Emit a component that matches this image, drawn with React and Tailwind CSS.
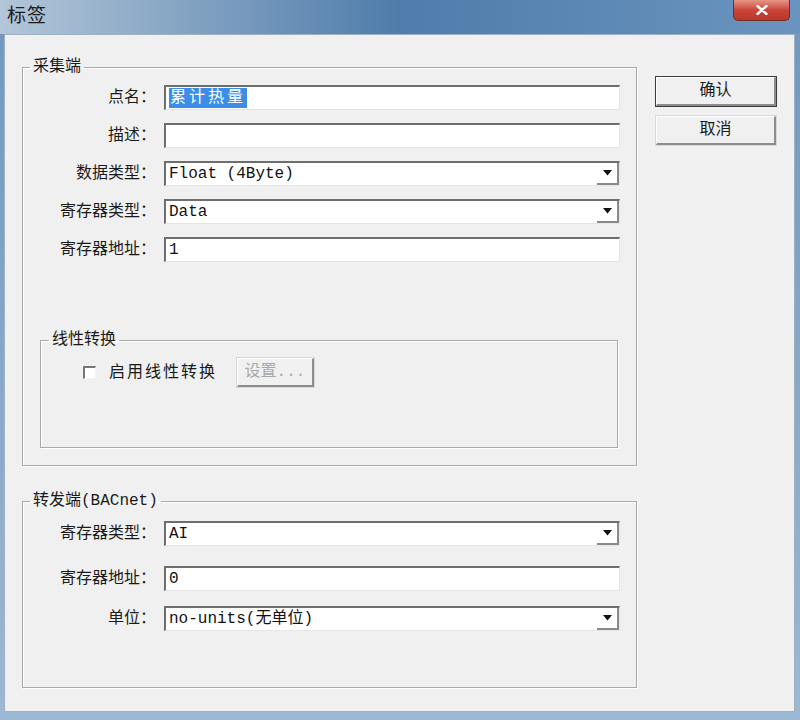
import React from "react";

const font = "font-['Liberation_Mono','Noto_Sans_CJK_SC',monospace]";

function Field({ value, combo, selected, mt = "" }) {
  return (
    <div className={`flex h-[25px] w-[456px] bg-white border-t-2 border-l-2 border-[#6e6e6e] border-b border-r border-b-[#e6e6e6] border-r-[#e6e6e6] ${mt}`}>
      <div className="flex-1 flex items-center pl-[3px] text-[16px] leading-[20px] text-[#111] whitespace-nowrap overflow-hidden">
        {selected ? (
          <span className="bg-[#3a8ee6] text-white px-[1px] tracking-[3px]">{value}</span>
        ) : (
          value
        )}
      </div>
      {combo && (
        <div className="w-[22px] h-full flex items-center justify-center border-b-2 border-r-2 border-[#8a8a8a]">
          <svg width="9" height="6" viewBox="0 0 9 6">
            <path d="M0 0 H9 L4.5 5.5 Z" fill="#111" />
          </svg>
        </div>
      )}
    </div>
  );
}

function Row({ label, children, className = "" }) {
  return (
    <div className={`flex items-center h-[25px] ${className}`}>
      <div className="w-[134px] text-right text-[16px] leading-[20px] text-[#1a1a1a] pr-[1px]">{label}</div>
      <div className="ml-[7px]">{children}</div>
    </div>
  );
}

function Group({ title, className = "", legendClass = "", children }) {
  return (
    <fieldset className={`border border-[#a9a9a9] shadow-[inset_1px_1px_0_#ffffff,1px_1px_0_#ffffff] ${className}`}>
      <legend className={`px-[3px] text-[16px] leading-[20px] text-[#1a1a1a] ${legendClass}`}>{title}</legend>
      {children}
    </fieldset>
  );
}

function WinButton({ children, primary, disabled, className = "" }) {
  return (
    <div
      className={`flex items-center justify-center text-[16px] leading-[20px] bg-[#f0f0f0] ${
        primary ? "border border-[#3c3c3c]" : "border border-[#d8d8d8]"
      } ${className}`}
    >
      <div
        className={`w-full h-full flex items-center justify-center border-t border-l border-white border-b-2 border-r-2 border-b-[#8c8c8c] border-r-[#8c8c8c] ${
          disabled ? "text-[#a8a8a8]" : "text-[#1a1a1a]"
        }`}
      >
        {children}
      </div>
    </div>
  );
}

export default function App() {
  return (
    <div className={`w-[800px] h-[720px] overflow-hidden flex flex-col bg-gradient-to-b from-[#6f97c0] to-[#9cb8d4] ${font}`}>
      {/* title bar */}
      <div className="h-[34px] flex items-start justify-between bg-gradient-to-r from-[#b3c6d8] via-[#4f7cab] to-[#6b95c0]">
        <div className="pl-[7px] pt-[6px] text-[19px] leading-[22px] text-[#1c1c1c] tracking-[1px]">标签</div>
        <div className="mr-[10px] w-[57px] h-[21px] rounded-b-[5px] border border-t-0 border-[#7a2a22] bg-gradient-to-b from-[#e69486] via-[#c9453a] to-[#b8362b] flex items-center justify-center">
          <svg width="12" height="10" viewBox="0 0 12 10">
            <path d="M1.5 1 L10.5 9 M10.5 1 L1.5 9" stroke="#ffffff" strokeWidth="2.4" strokeLinecap="round" />
          </svg>
        </div>
      </div>

      {/* dialog body */}
      <div className="ml-[4px] mr-[5px] h-[678px] bg-[#f0f0f0] border border-[#9fb0c2] pt-[22px] pl-[17px] flex items-start">
        <div className="flex flex-col">
          <Group title="采集端" className="w-[615px] pr-[16px] pb-[17px]" legendClass="ml-[7px]">
            <div className="flex flex-col gap-[13px] pt-[8px]">
              <Row label="点名：">
                <Field value="累计热量" selected />
              </Row>
              <Row label="描述：">
                <Field value="" />
              </Row>
              <Row label="数据类型：">
                <Field value="Float (4Byte)" combo />
              </Row>
              <Row label="寄存器类型：">
                <Field value="Data" combo />
              </Row>
              <Row label="寄存器地址：">
                <Field value="1" />
              </Row>
            </div>

            <Group title="线性转换" className="ml-[17px] mt-[68px] w-[578px] h-[118px]" legendClass="ml-[8px]">
              <div className="flex items-center pt-[7px] pl-[42px]">
                <div className="w-[13px] h-[13px] bg-white border-t-2 border-l-2 border-[#777] border-b border-r border-b-[#f4f4f4] border-r-[#f4f4f4]" />
                <span className="ml-[13px] text-[16px] leading-[20px] tracking-[2px] text-[#1a1a1a]">启用线性转换</span>
                <WinButton disabled className="ml-[19px] w-[79px] h-[31px]">设置...</WinButton>
              </div>
            </Group>
          </Group>

          <Group title="转发端(BACnet)" className="mt-[25px] w-[615px] pr-[16px] pb-[56px]" legendClass="ml-[7px]">
            <div className="flex flex-col pt-[10px]">
              <Row label="寄存器类型：">
                <Field value="AI" combo />
              </Row>
              <Row label="寄存器地址：" className="mt-[20px]">
                <Field value="0" />
              </Row>
              <Row label="单位：" className="mt-[15px]">
                <Field value="no-units(无单位)" combo />
              </Row>
            </div>
          </Group>
        </div>

        <div className="ml-[18px] mt-[19px] flex flex-col gap-[8px]">
          <WinButton primary className="w-[122px] h-[31px]">确认</WinButton>
          <WinButton className="w-[122px] h-[31px]">取消</WinButton>
        </div>
      </div>
    </div>
  );
}
